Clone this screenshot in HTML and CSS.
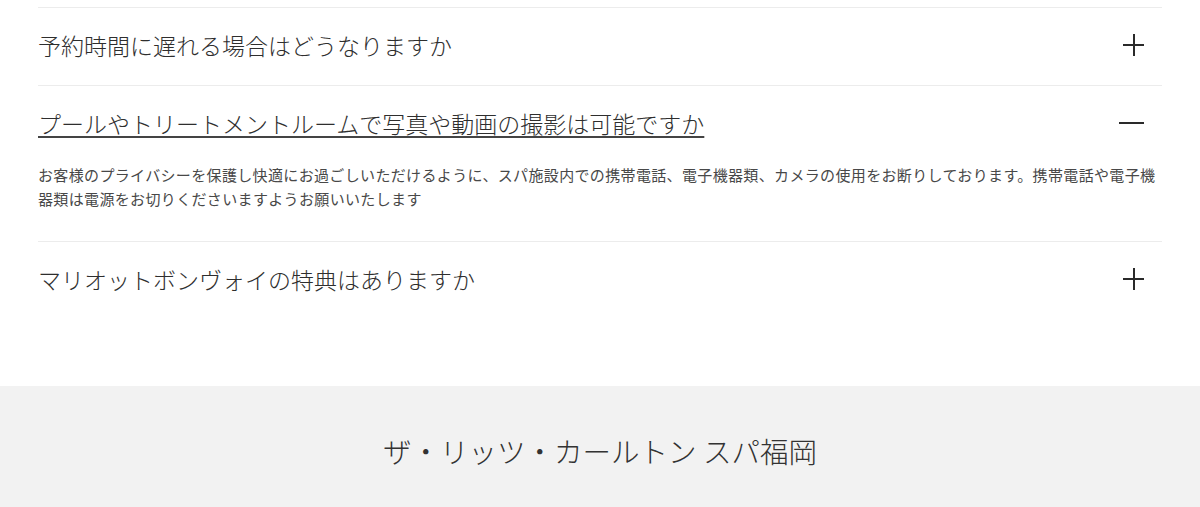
FILE: index.html
```html
<!DOCTYPE html>
<html lang="ja">
<head>
<meta charset="utf-8">
<link rel="stylesheet" href="styles.css">
</head>
<body>
<section class="faq">
  <div class="faq-item">
    <div class="faq-q">
      <span class="q-text">予約時間に遅れる場合はどうなりますか</span>
      <span class="icon plus"></span>
    </div>
  </div>
  <div class="faq-item open">
    <div class="faq-q">
      <span class="q-text">プールやトリートメントルームで写真や動画の撮影は可能ですか</span>
      <span class="icon minus"></span>
    </div>
    <p class="faq-a">お客様のプライバシーを保護し快適にお過ごしいただけるように、スパ施設内での携帯電話、電子機器類、カメラの使用をお断りしております。携帯電話や電子機器類は電源をお切りくださいますようお願いいたします</p>
  </div>
  <div class="faq-item last">
    <div class="faq-q">
      <span class="q-text">マリオットボンヴォイの特典はありますか</span>
      <span class="icon plus"></span>
    </div>
  </div>
</section>
<footer class="footer">
  <h2 class="footer-title">ザ・リッツ・カールトン スパ福岡</h2>
</footer>
</body>
</html>
```

FILE: styles.css
```css
html, body {
  margin: 0;
  padding: 0;
  background: #fff;
}
body {
  font-family: "Noto Sans CJK JP", "Noto Sans", sans-serif;
  color: #333;
}
.faq {
  padding: 7px 38px 0;
  height: 386px;
  box-sizing: border-box;
}
.faq-item {
  border-top: 1px solid #ececec;
}
.faq-q {
  height: 77px;
  padding-bottom: 3px;
  box-sizing: border-box;
  display: flex;
  align-items: center;
  justify-content: space-between;
}
.q-text {
  font-size: 23px;
  line-height: 30px;
  color: #2e2e2e;
  font-weight: 300;
}
.open .q-text {
  text-decoration: underline;
  text-decoration-thickness: 2px;
  text-underline-offset: 3px;
  text-decoration-color: #444;
}
.icon {
  position: relative;
  width: 26px;
  height: 24px;
  margin-right: 17px;
}
.icon::before,
.icon::after {
  content: "";
  position: absolute;
  background: #2a2a2a;
}
.plus::before {
  left: 4px;
  top: 11px;
  width: 21px;
  height: 2px;
}
.plus::after {
  left: 14px;
  top: 1px;
  width: 2px;
  height: 22px;
}
.minus::before {
  left: 0;
  top: 11px;
  width: 25px;
  height: 2px;
}
.minus::after {
  display: none;
}
.faq-a {
  margin: 0;
  padding: 0 0 30px;
  font-size: 15px;
  letter-spacing: 0.35px;
  line-height: 24px;
  color: #484848;
  font-weight: 400;
}
.footer {
  background: #f2f2f2;
  height: 160px;
  padding-top: 45px;
  box-sizing: border-box;
}
.footer-title {
  margin: 0;
  text-align: center;
  font-size: 28.5px;
  line-height: 40px;
  font-weight: 300;
  color: #333;
}
```
